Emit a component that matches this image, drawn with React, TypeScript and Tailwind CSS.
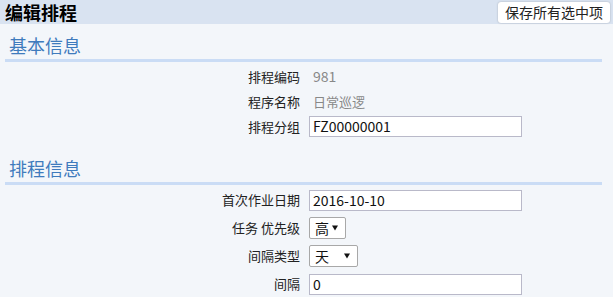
import React from 'react';

const font = { fontFamily: '"Noto Sans CJK SC", "Noto Sans", sans-serif' };

const Caret = () => (
  <svg width="6" height="6" viewBox="0 0 6 6" className="shrink-0">
    <polygon points="0,0.5 6,0.5 3,5.5" fill="#111" />
  </svg>
);

const Row: React.FC<{ label: string; h: string; children: React.ReactNode }> = ({ label, h, children }) => (
  <div className={`flex items-center ${h}`}>
    <div className="w-[295px] shrink-0 text-right text-[13px] text-[#222]">{label}</div>
    <div className="ml-[9px] flex items-center">{children}</div>
  </div>
);

const TextBox: React.FC<{ value: string }> = ({ value }) => (
  <div className="flex h-[21px] w-[213px] items-center border border-[#b9b9c9] bg-white px-[3px] text-[14px] text-[#111]">
    {value}
  </div>
);

const SelectBox: React.FC<{ value: string; w: string }> = ({ value, w }) => (
  <div className={`flex h-[22px] ${w} items-center justify-between rounded-[2px] border border-[#a8a8a8] bg-white pl-[5px] pr-[7px] text-[14px] text-[#111]`}>
    <span>{value}</span>
    <Caret />
  </div>
);

const Heading: React.FC<{ title: string; pt: string }> = ({ title, pt }) => (
  <div className={`${pt} border-b-[3px] border-[#cadcf5] pb-[2px]`}>
    <div className="pl-[4px] text-[18px] leading-[24px] text-[#3f7bbd]">{title}</div>
  </div>
);

export default function App() {
  return (
    <div className="h-[297px] w-[613px] overflow-hidden bg-[#f3f6fa]" style={font}>
      <div className="flex h-[24px] items-center justify-between bg-[#d9e3f1] pl-[5px] pr-[3px]">
        <div className="text-[18px] font-bold leading-none text-black">编辑排程</div>
        <button className="h-[21px] w-[112px] rounded-[3px] bg-white text-[14px] leading-none text-[#222] shadow-[0_0_2px_rgba(0,0,0,0.25)]">
          保存所有选中项
        </button>
      </div>

      <div className="pl-[5px] pr-[11px]">
        <Heading title="基本信息" pt="pt-[9px]" />
        <div className="pt-[2px]">
          <Row label="排程编码" h="h-[25px]">
            <span className="pl-[4px] text-[14px] text-[#888]">981</span>
          </Row>
          <Row label="程序名称" h="h-[25px]">
            <span className="pl-[4px] text-[13px] text-[#888]">日常巡逻</span>
          </Row>
          <Row label="排程分组" h="h-[25px]">
            <TextBox value="FZ00000001" />
          </Row>
        </div>

        <Heading title="排程信息" pt="pt-[17px]" />
        <div className="pt-[1px]">
          <Row label="首次作业日期" h="h-[28px]">
            <TextBox value="2016-10-10" />
          </Row>
          <Row label="任务 优先级" h="h-[28px]">
            <SelectBox value="高" w="w-[37px]" />
          </Row>
          <Row label="间隔类型" h="h-[28px]">
            <SelectBox value="天" w="w-[49px]" />
          </Row>
          <Row label="间隔" h="h-[28px]">
            <TextBox value="0" />
          </Row>
        </div>
      </div>
    </div>
  );
}
